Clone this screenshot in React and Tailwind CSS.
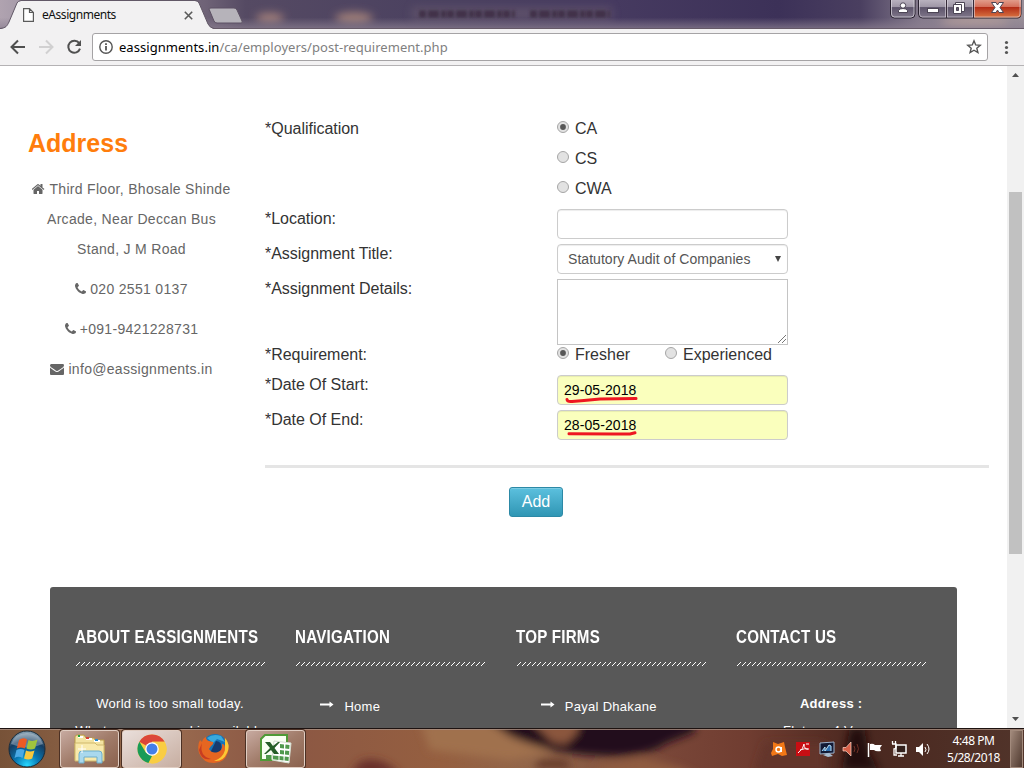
const stripe = "M0 4h1v-1h1v-1h1v-1h1v-1h-1v1h-1v1h-1v1h-1Z";

const glyphs = {
  home: {
    box: "64 0 1664 1792",
    width: 13,
    d: "M1408 992v480q0 26-19 45t-45 19h-384v-384h-256v384h-384q-26 0-45-19t-19-45v-480q0-1 .5-3t.5-3l575-474 575 474q1 2 1 6zm223-69l-62 74q-8 9-21 11h-3q-13 0-21-7l-692-577-692 577q-12 8-24 7-13-2-21-11l-62-74q-8-10-7-23.500t11-21.500l719-599q32-26 76-26t76 26l244 204v-195q0-14 9-23t23-9h192q14 0 23 9t9 23v408l219 182q10 8 11 21.500t-7 23.500z",
  },
  phone: {
    box: "192 0 1408 1792",
    width: 11,
    d: "M1600 1240q0 27-10 70.500t-21 68.500q-21 50-122 106-94 51-186 51-27 0-53-3.500t-57.500-12.500-47-14.500-55.500-20.500-49-18q-98-35-175-83-127-79-264-216t-216-264q-48-77-83-175-3-9-18-49t-20.500-55.500-14.500-47-12.500-57.500-3.500-53q0-92 51-186 56-101 106-122 25-11 68.500-21t70.500-10q14 0 21 3 18 6 53 76 11 19 30 54t35 63.500 31 53.500q3 4 17.500 25t21.500 35.500 7 28.500q0 20-28.500 50t-62 55-62 53-28.500 46q0 9 5 22.500t8.500 20.500 14 24 11.500 19q76 137 174 235t235 174q2 1 19 11.500t24 14 20.500 8.500 22.500 5q18 0 46-28.500t53-62 55-62 50-28.500q14 0 28.500 7t35.500 21.500 25 17.500q25 15 53.500 31t63.500 35 54 30q70 35 76 53 3 7 3 21z",
  },
  envelope: {
    box: "0 0 1792 1792",
    width: 14,
    d: "M1792 710v794q0 66-47 113t-113 47h-1472q-66 0-113-47t-47-113v-794q44 49 101 87 362 246 497 345 57 42 92.500 65.500t94.500 48 110 24.500h2q51 0 110-24.500t94.500-48 92.500-65.500q170-123 498-345 57-39 100-87zm0-294q0 79-49 151t-122 123q-376 261-468 325-10 7-42.500 30.500t-54 38-52 32.500-57.500 27-50 9h-2q-23 0-50-9t-57.500-27-52-32.500-54-38-42.500-30.500q-91-64-262-182.500t-205-142.500q-62-42-117-115.500t-55-136.500q0-78 41.500-130t118.500-52h1472q65 0 112.500 47t47.500 113z",
  },
};

function Glyph({ name }) {
  const g = glyphs[name];
  return (
    <svg className="mr-[4px] inline align-[-2px]" width={g.width} height="14" viewBox={g.box} fill="currentColor" preserveAspectRatio="none"><path d={g.d} /></svg>
  );
}

function TitleBackdrop() {
  return (
    <svg className="absolute inset-0" width="1024" height="29" viewBox="0 0 1024 29" preserveAspectRatio="none">
      <defs>
        <linearGradient id="sky" x1="0" x2="1">
          <stop offset="0" stopColor="#b0a3b0" />
          <stop offset="0.04" stopColor="#9c92a2" />
          <stop offset="0.2" stopColor="#6f6377" />
          <stop offset="0.24" stopColor="#554a63" />
          <stop offset="0.42" stopColor="#4b4160" />
          <stop offset="0.6" stopColor="#463a60" />
          <stop offset="0.76" stopColor="#3c3158" />
          <stop offset="0.84" stopColor="#4a3f60" />
          <stop offset="0.9" stopColor="#857b8c" />
          <stop offset="1" stopColor="#9a8f98" />
        </linearGradient>
        <linearGradient id="haze" x1="0" x2="0" y1="0" y2="1">
          <stop offset="0.6" stopColor="#8b7f90" stopOpacity="0" />
          <stop offset="1" stopColor="#8b7f90" stopOpacity="0.75" />
        </linearGradient>
        <filter id="soft" filterUnits="userSpaceOnUse" x="0" y="-20" width="1024" height="70"><feGaussianBlur stdDeviation="4" /></filter>
        <filter id="soft2" filterUnits="userSpaceOnUse" x="0" y="-20" width="1024" height="70"><feGaussianBlur stdDeviation="1.800" /></filter>
      </defs>
      <rect width="1024" height="29" fill="url(#sky)" />
      <ellipse cx="270" cy="18" rx="14" ry="5" fill="#a27f7a" filter="url(#soft)" />
      <ellipse cx="354" cy="18" rx="19" ry="6" fill="#9e7e78" filter="url(#soft)" />
      <rect x="412" y="7" width="200" height="13" fill="#6a5b70" opacity="0.6" filter="url(#soft)" />
      <path d="M419 14h96M530 14h80" fill="none" stroke="#3a2c3f" strokeWidth="7" strokeDasharray="7 2 11 2 5 1" opacity="0.8" filter="url(#soft2)" />
      <ellipse cx="975" cy="24" rx="35" ry="6" fill="#bba39c" filter="url(#soft)" />
      <rect width="1024" height="29" fill="url(#haze)" />
      <rect y="28" width="1024" height="1" fill="#665a68" />
      <path d="M0 29C6 28 7 26 9 22L17 3q1-2 4-2H195q3 0 4 2l9 21q2 4 6 5Z" fill="#f2f1f2" />
      <path d="M0 28.500C6 28 7 26 9 22L17 3q1-2 4-2.500H195q3 0 4 2.500l9 21q2 4 6 4.500" fill="none" stroke="#625867" />
      <path d="M209 9q0-1 2-1H234q2 0 3 2l5 11q1 2-1 2H217q-2 0-3-2Z" fill="#b6b3ba" stroke="#5d5164" />
    </svg>
  );
}

function WindowButtons() {
  return (
    <svg className="absolute right-0 top-0" width="136" height="20" viewBox="888 0 136 20">
      <defs>
        <linearGradient id="glass" x1="0" x2="0" y1="0" y2="1">
          <stop offset="0" stopColor="#bcb5c2" /><stop offset="0.42" stopColor="#9e96a6" />
          <stop offset="0.45" stopColor="#5d546b" /><stop offset="1" stopColor="#81788b" />
        </linearGradient>
        <linearGradient id="red" x1="0" x2="0" y1="0" y2="1">
          <stop offset="0" stopColor="#e3a291" /><stop offset="0.42" stopColor="#d4705b" />
          <stop offset="0.45" stopColor="#b32c16" /><stop offset="1" stopColor="#d87442" />
        </linearGradient>
      </defs>
      <path d="M890.500-1V14q0 4 4 4H911q4 0 4-4V-1Z" fill="url(#glass)" stroke="#292230" />
      <path d="M891.500-1V14q0 3 3 3H911q3 0 3-3V-1" fill="none" stroke="#dad5de" strokeOpacity="0.75" />
      <path d="M918.500-1V14q0 4 4 4H1018q3 0 3-4V-1Z" fill="url(#glass)" stroke="#292230" />
      <path d="M974-1V17.500H1018q3 0 3-4V-1Z" fill="url(#red)" />
      <path d="M919.500-1V14q0 3 3 3H1017q3 0 3-3V-1M945.500 0v17M947.500 0v17M972.500 0v17M974.500 0v17" fill="none" stroke="#ded7df" strokeOpacity="0.6" />
      <path d="M946.500 0v18M973.500 0v18" stroke="#352a38" />
      <g stroke="#4c4555" strokeWidth="1" fill="#fff">
        <circle cx="903" cy="5.500" r="2.700" />
        <path d="M898.500 12.500v-2q1-2 4.500-2t4.500 2v2Z" />
        <rect x="927.500" y="8.500" width="11" height="4" />
        <path d="M955.500 2.500h9v9h-9Z" />
        <path d="M953.500 4.500h8v9h-8Z" />
        <path d="M956.500 7.500h2v3h-2Z" fill="#635a6d" />
        <path d="M991.500 2.500h4.500l1.500 2.500 1.500-2.500h4.500l-3.500 5 3.500 5h-4.500l-1.500-2.500-1.500 2.500h-4.500l3.500-5Z" />
      </g>
    </svg>
  );
}

function TitleBar() {
  return (
    <header className="relative h-[29px] shrink-0">
      <TitleBackdrop />
      <div className="relative flex h-[29px] items-center pl-[23px] pt-px">
        <svg width="11" height="14" viewBox="0 0 11 14" fill="#fff" stroke="#5a5a5a" strokeWidth="1.200">
          <path d="M0.600 0.600H6.500L10.400 4.500V13.400H0.600ZM6.500 0.600V4.500H10.400" />
        </svg>
        <span className="ml-2 w-[142px] font-['Noto_Sans','Open_Sans',sans-serif] text-[12px] leading-[16px] tracking-[-0.450px] text-[#111]">eAssignments</span>
        <svg width="9" height="9" viewBox="0 0 9 9" stroke="#5a5a5a" strokeWidth="1.600"><path d="M0.800 0.800L8.200 8.200M8.200 0.800L0.800 8.200" /></svg>
      </div>
      <WindowButtons />
    </header>
  );
}

function Toolbar() {
  return (
    <nav className="flex h-[37px] shrink-0 items-start border-b border-[#b4b2b4] bg-[#f2f1f2] pt-1">
      <svg className="shrink-0" width="92" height="28" viewBox="0 33 92 28" fill="none" strokeWidth="2">
        <path d="M25 47H12M18 40.500L11.500 47L18 53.500" stroke="#4f4f4f" />
        <path d="M39 47H52M46 40.500L52.500 47L46 53.500" stroke="#d1d0d1" />
        <path d="M79.200 43.200A6 6 0 1 0 80 48.700" stroke="#505050" />
        <path d="M81 40V46H75Z" fill="#505050" />
      </svg>
      <div className="flex h-7 w-[896px] shrink-0 items-center rounded-[3px] border border-[#a5a3a5] bg-white pl-[6px] pr-[5px]">
        <svg width="14" height="14" viewBox="0 0 14 14" fill="none" stroke="#555">
          <circle cx="7" cy="7" r="6.200" strokeWidth="1.400" /><path d="M7 6V10.500M7 3.300V5" strokeWidth="1.800" />
        </svg>
        <span className="ml-[6px] flex-1 font-['Noto_Sans','Open_Sans',sans-serif] text-[13px] leading-[18px] tracking-[0.040px] text-[#808080]"><span className="text-black">eassignments.in</span>/ca/employers/post-requirement.php</span>
        <svg width="16" height="16" viewBox="0 0 16 16" fill="none" stroke="#555" strokeWidth="1.400"><path d="M8 1.800L9.700 5.900L14.200 6.300L10.800 9.200L11.900 13.600L8 11.200L4.100 13.600L5.200 9.200L1.800 6.300L6.300 5.900Z" /></svg>
      </div>
      <svg className="ml-[15px]" width="7" height="28" viewBox="0 0 7 28" fill="#555"><circle cx="3.500" cy="9.500" r="1.600" /><circle cx="3.500" cy="14.500" r="1.600" /><circle cx="3.500" cy="19.500" r="1.600" /></svg>
    </nav>
  );
}

function Sidebar() {
  return (
    <aside className="w-[265px] shrink-0 pr-[2px] pt-[57px] text-center text-[14px] leading-[30px] tracking-[0.310px] text-[#666]">
      <h2 className="pl-7 text-left text-[25px] font-bold leading-[40px] tracking-normal text-[#ff7d0c]">Address</h2>
      <p className="mt-[11px] whitespace-nowrap"><Glyph name="home" />Third Floor, Bhosale Shinde<br />Arcade, Near Deccan Bus<br />Stand, J M Road</p>
      <p className="mt-[10px]"><Glyph name="phone" />020 2551 0137</p>
      <p className="mt-[10px]"><Glyph name="phone" />+091-9421228731</p>
      <p className="mt-[10px]"><Glyph name="envelope" />info@eassignments.in</p>
    </aside>
  );
}

function Radio({ label, checked }) {
  return (
    <label className="flex h-[30px] items-center pt-[2px]">
      <svg className="mb-[4px] mr-[6px]" width="12" height="12" viewBox="0 0 12 12">
        <circle cx="6" cy="6" r="5.500" fill="#e2e2e2" stroke="#a5a5a5" />
        {checked && <circle cx="6" cy="6" r="2.900" fill="#575757" />}
      </svg>
      {label}
    </label>
  );
}

function Row({ label, height, children }) {
  return (
    <div className={`flex ${height}`}>
      <div className="w-[292px] shrink-0 leading-[32px] tracking-[-0.020px]">{label}</div>
      <div className="w-[231px]">{children}</div>
    </div>
  );
}

const field = "h-[30px] w-[231px] rounded-[4px] border border-[#ccc] text-[14px] leading-[28px] shadow-[inset_0_1px_1px_rgba(0,0,0,0.075)]";

function DateField({ value, mark }) {
  return (
    <div className={`relative mt-[6px] bg-[#faffbd] pl-[6px] tracking-[0.080px] text-black ${field}`}>
      {value}
      <svg className="absolute left-[6px] top-[18px]" width="80" height="12" viewBox="0 0 80 12" fill="none" stroke="#ee1722" strokeWidth="3" strokeLinecap="round" strokeLinejoin="round"><path d={mark} /></svg>
    </div>
  );
}

function RequirementForm() {
  return (
    <main className="w-[724px] text-[16px] text-[#333]">
      <div className="pt-[47px]">
        <Row label="*Qualification" height="h-[90px]"><Radio label="CA" checked /><Radio label="CS" /><Radio label="CWA" /></Row>
        <Row label="*Location:" height="h-[35px]"><div className={`mt-[6px] bg-white ${field}`} /></Row>
        <Row label="*Assignment Title:" height="h-[35px]">
          <div className={`mt-[6px] flex justify-between bg-white pl-[10px] pr-[6px] tracking-[0.040px] text-[#555] ${field}`}>
            Statutory Audit of Companies
            <svg className="mt-[11px]" width="6" height="6" viewBox="0 0 6 6"><path d="M0 0H6L3 6Z" fill="#444" /></svg>
          </div>
        </Row>
        <Row label="*Assignment Details:" height="h-[66px]">
          <div className="mt-[6px] flex h-[66px] items-end justify-end border border-[#c4c4c4] p-px">
            <svg width="8" height="8" viewBox="0 0 8 8" stroke="#777"><path d="M0 8L8 0M4 8L8 4" /></svg>
          </div>
        </Row>
        <Row label="*Requirement:" height="h-[30px]">
          <div className="flex"><div className="w-[108px]"><Radio label="Fresher" checked /></div><Radio label="Experienced" /></div>
        </Row>
        <Row label="*Date Of Start:" height="h-[35px]"><DateField value="29-05-2018" mark="M3 5.500Q3.500 8 8 7.500L20 6.500 36 5 72 4.500" /></Row>
        <Row label="*Date Of End:" height="h-[35px]"><DateField value="28-05-2018" mark="M5 4.800L50 5H66L71 3.800" /></Row>
      </div>
      <hr className="mt-[26px] h-[3px] border-0 bg-[#e5e5e5]" />
      <button className="ml-[244px] mt-[19px] block h-[30px] w-[54px] rounded-[3px] border border-[#2c89a6] bg-linear-to-b from-[#5bc0de] to-[#2f96b4] text-[16px] leading-[28px] text-white shadow-[inset_0_1px_0_rgba(255,255,255,0.2)]">Add</button>
    </main>
  );
}

function FooterColumn({ title, children }) {
  return (
    <section className="w-[220.400px] shrink-0">
      <h3 className="h-[24px] origin-left scale-x-[0.84] whitespace-nowrap text-[18px] font-bold leading-[24px]">{title}</h3>
      <svg className="ml-px mt-[13px]" width="190" height="5" aria-hidden="true" shapeRendering="crispEdges">
        <defs><pattern id="stripes" width="5" height="5" patternUnits="userSpaceOnUse"><path d="M0 3h1v1h-1zM1 2h1v1h-1zM2 1h1v1h-1zM3 0h1v1h-1z" fill="#fff" /></pattern></defs>
        <rect width="190" height="4" fill="url(#stripes)" />
      </svg>
      {children}
    </section>
  );
}

function FooterLink({ label }) {
  return (
    <p className="mt-[26px] flex items-center pl-[25px] leading-[27px]">
      <svg className="mb-[5px] mr-[10px]" width="14" height="7" viewBox="0 0 14 7" fill="#fff"><path d="M0 2.500H9.500V0.500L13.500 3.500L9.500 6.500V4.500H0Z" /></svg>
      {label}
    </p>
  );
}

function Footer() {
  return (
    <footer className="ml-[50px] mt-[70px] flex w-[907px] shrink-0 rounded-t-[3px] bg-[#585858] pb-5 pl-[25px] pt-[38px] text-[13px] tracking-[0.290px] text-white">
      <FooterColumn title="ABOUT EASSIGNMENTS">
        <p className="mt-[23px] w-[190px] whitespace-nowrap text-center leading-[27px]">World is too small today.<br />Whatever you need is available</p>
      </FooterColumn>
      <FooterColumn title="NAVIGATION"><FooterLink label="Home" /></FooterColumn>
      <FooterColumn title="TOP FIRMS"><FooterLink label="Payal Dhakane" /></FooterColumn>
      <FooterColumn title="CONTACT US">
        <p className="mt-[23px] w-[190px] text-center leading-[27px]"><b>Address :</b><br />Flat no. 4 Varun</p>
      </FooterColumn>
    </footer>
  );
}

function Scrollbar() {
  return (
    <div className="flex w-[17px] shrink-0 flex-col items-center bg-[#f1f1f1]">
      <svg className="mt-[7px] shrink-0" width="7" height="4"><path d="M0 4L3.500 0L7 4Z" fill="#505050" /></svg>
      <div className="mt-[115px] h-[362px] w-[13px] bg-[#c1c1c1]" />
      <svg className="mb-[7px] mt-auto shrink-0" width="7" height="4"><path d="M0 0L3.500 4L7 0Z" fill="#505050" /></svg>
    </div>
  );
}

function TaskbarBackdrop() {
  return (
    <svg className="absolute inset-0" width="1024" height="40" viewBox="0 0 1024 40">
      <defs>
        <linearGradient id="wood" x1="0" x2="1">
          <stop offset="0" stopColor="#775238" /><stop offset="0.15" stopColor="#9b6d50" />
          <stop offset="0.27" stopColor="#8b5744" /><stop offset="0.43" stopColor="#955f40" />
          <stop offset="0.52" stopColor="#92664a" /><stop offset="0.66" stopColor="#784537" />
          <stop offset="0.73" stopColor="#703d31" /><stop offset="0.84" stopColor="#4a271f" />
          <stop offset="1" stopColor="#51342a" />
        </linearGradient>
        <filter id="blur" x="-30%" y="-50%" width="160%" height="200%"><feGaussianBlur stdDeviation="4" /></filter>
      </defs>
      <rect width="1024" height="40" fill="url(#wood)" />
      <g filter="url(#blur)">
        <path d="M420-6h80l50 30-40 8-80-10Z" fill="#a0714d" />
        <path d="M360 34q20-8 40 12h-50Z" fill="#672f2a" />
        <path d="M484-10L510 8Q560 30 622 28Q655 25 665 16L695 4V-12Z" fill="#220c1d" />
        <path d="M530-8h48v12l-12 12-14-2Z" fill="#8b573d" />
        <path d="M540 32h25l8 8h-40Z" fill="#5f3428" />
        <path d="M600 37l40-8 40 10 20 10h-110Z" fill="#8f5c40" />
        <path d="M850 0h15q0 25 15 42h-38Z" fill="#24100f" />
        <path d="M765 15h60v30h-70Z" fill="#633429" />
      </g>
      <rect width="1024" height="1" fill="#1d1210" />
      <rect y="1" width="1024" height="1" fill="#a98f81" fillOpacity="0.8" />
    </svg>
  );
}

function TaskButton({ active, children }) {
  return (
    <div className={`flex h-[38px] w-[59px] items-center justify-center rounded-[3px] border border-[#e0cdc2] shadow-[0_0_0_1px_#4b3024] ${active ? "bg-linear-to-br from-[#eadfdb] to-[#c7aea1]" : "bg-linear-to-br from-[#c7aaa0] via-[#a17c6a] to-[#8b624e]"}`}>
      {children}
    </div>
  );
}

function StartOrb() {
  return (
    <svg width="38" height="38" viewBox="0 0 38 38">
      <defs><radialGradient id="orb" cx="0.5" cy="0.95" r="0.95"><stop offset="0" stopColor="#27d8ff" /><stop offset="0.35" stopColor="#0879b4" /><stop offset="0.72" stopColor="#153c61" /><stop offset="1" stopColor="#91aabb" /></radialGradient></defs>
      <circle cx="19" cy="19" r="18" fill="url(#orb)" stroke="#182b3a" />
      <path d="M3 14Q7 3 19 3T35 14Q19 21 3 14Z" fill="#fff" fillOpacity="0.3" />
      <path d="M11 10q4-3 8-.5l-2.200 9q-4-2-8 0Z" fill="#ed5b24" />
      <path d="M20.500 10q4 2 9-.5l-2.500 9q-4 2-8.500 0Z" fill="#a0c43e" />
      <path d="M8.500 20q4-2 8 0l-2 8q-4-2.500-8 0Z" fill="#4aa9e5" />
      <path d="M18 20.500q4 2 8.500 0l-2.300 8q-4 2-8.200 0Z" fill="#f9c83c" />
    </svg>
  );
}

function FolderIcon() {
  return (
    <svg width="34" height="30" viewBox="0 0 34 30">
      <path d="M2 5V3q0-2 2-2h7l2 3h8l1 2h9v20H2Z" fill="#f3e3a1" stroke="#b99b4a" />
      <path d="M5 3h5M13 5h6M21 7h6" stroke="#fff" strokeWidth="2" /><path d="M5 2h2" stroke="#24a23b" strokeWidth="2" /><path d="M13 4h3" stroke="#d64234" strokeWidth="2" /><path d="M22 6h3" stroke="#2588d0" strokeWidth="2" />
      <path d="M2 9h20l2 2h7v16H2Z" fill="#f8e9ab" stroke="#cfb86d" />
      <path d="M6 29V20q0-3 3-3h17q3 0 3 3v9h-5v-6H11v6Z" fill="#a9d8ed" stroke="#6caecb" />
      <path d="M9 11v8M5 15h8" stroke="#fff" />
    </svg>
  );
}

function ChromeIcon() {
  return (
    <svg width="30" height="30" viewBox="0 0 30 30">
      <circle cx="15" cy="15" r="14.500" fill="#f9cd43" />
      <path d="M15 15L2.400 7.700A14.500 14.500 0 0 1 27.600 7.700H15Z" fill="#dc4638" />
      <path d="M2.400 7.700L8.800 18.600 15 22l-3.600 7A14.500 14.500 0 0 1 2.400 7.700Z" fill="#199b58" />
      <path d="M27.600 7.700H15L21 18.500 14.200 29.500A14.500 14.500 0 0 0 27.600 7.700Z" fill="#f9cd43" />
      <circle cx="15" cy="15" r="6.800" fill="#fff" /><circle cx="15" cy="15" r="5.500" fill="#447fe8" />
    </svg>
  );
}

function FirefoxIcon() {
  return (
    <svg width="31" height="31" viewBox="0 0 31 31">
      <circle cx="17" cy="13.500" r="12.500" fill="#1674b7" /><path d="M9 5q6-5 14-2l4 6-8-3-4 4Z" fill="#39a9dd" />
      <path d="M18 8q7 0 5 10-4 7-11 2Z" fill="#173b70" />
      <path d="M2 7l2 2Q5 5 8 4q0 3 3 4l4 1q1 2-2 4l-2 3q3 5 9 3 5-2 4-8 3 0 3 4 2-6-1-10 6 5 4 14-3 11-14 11T1 20Q-1 12 2 7Z" fill="#e66621" />
      <path d="M27 5q6 7 2 15-4 9-13 8 9-3 11-11Z" fill="#fbc934" /><path d="M4 10q-3 13 9 16Q3 28 1 17Z" fill="#c83d21" />
    </svg>
  );
}

function ExcelIcon() {
  return (
    <svg width="33" height="32" viewBox="0 0 33 32">
      <path d="M6 2H28V9L26 27H2V6Z" fill="#f8fff2" stroke="#4e9a36" strokeWidth="2" />
      <path d="M15 8l17 2-2 20-17-3Z" fill="#fff" stroke="#d5ded0" />
      <path d="M21 11l4 .4v4l-4-.4zm5.500.600l4 .4-.3 4-4-.4zM21 17l4 .4v4l-4-.4zm5.200.600l4 .4-.3 4-4-.4zM20.500 23l4 .4v4l-4-.4zm5.300.600l4 .4-.3 4-4-.4zM7 22h5.500v4H7zm7 .500l5.500.500v4l-5.500-.8z" fill="#50994d" />
      <path d="M6 9h5l3 4 5-4h2l-5.500 6 4.500 6h-5l-3-4-5 4H5l6-6Z" fill="#255d27" />
    </svg>
  );
}

function Tray() {
  return (
    <svg width="166" height="22" viewBox="770 737 166 22">
      <path d="M773 741l5 2 6-2 1 5 2 8-5 1-4-2-6 2-1-3 2-4Z" fill="#f27817" /><circle cx="778.500" cy="748.500" r="2.500" fill="none" stroke="#fff" strokeWidth="1.500" /><path d="M781.500 746v5" stroke="#fff" />
      <rect x="796" y="741" width="14" height="14" fill="#c80e13" /><path d="M798 752q6-5 6-9 0 6 5 5M800 749q5-2 8-1M806 743h3" fill="none" stroke="#fff" />
      <path d="M820 742l14-1v11l-14 1Z" fill="#121a35" stroke="#9cb2cc" /><path d="M822 750l3-4v4l4-6 2 1v5" fill="#2f6fae" stroke="#b9def2" /><path d="M823 754l6-2 4 3-5 1Z" fill="#a8bdd0" />
      <path d="M843 746.500h3l5-5.500v14l-5-5h-3Z" fill="#d65f47" stroke="#ffd4c4" strokeWidth="0.700" /><path d="M854 745q2 3 0 6M857 743q3 5 0 9" fill="none" stroke="#6f3025" />
      <path d="M868.500 742v14" stroke="#fff" strokeWidth="1.500" /><path d="M870 743q3-1 5 1h7l-2 3 1 3q-5 1-7-1h-4Z" fill="#fff" />
      <path d="M896 744h10v8h-10Z" fill="#34221e" stroke="#fff" strokeWidth="1.500" /><path d="M892 743h4v3q0 2-2 2v6h3M892.500 740v3M895.500 740v3M898 755h6M901 752v3" fill="none" stroke="#fff" strokeWidth="1.300" />
      <path d="M916 746h3l4-4v13l-4-4h-3Z" fill="#fff" /><path d="M925 746q2 3 0 5M927 743q4 5 0 10" fill="none" stroke="#fff" />
    </svg>
  );
}

function Taskbar() {
  return (
    <div className="relative h-10 shrink-0">
      <TaskbarBackdrop />
      <div className="relative flex h-10 items-center pt-px">
        <div className="ml-2"><StartOrb /></div>
        <div className="ml-[14px]"><TaskButton><FolderIcon /></TaskButton></div>
        <div className="ml-[3px]"><TaskButton active><ChromeIcon /></TaskButton></div>
        <div className="ml-[17px] w-[31px]"><FirefoxIcon /></div>
        <div className="ml-[17px]"><TaskButton><ExcelIcon /></TaskButton></div>
        <div className="ml-[465px]"><Tray /></div>
        <div className="ml-[3px] w-[69px] shrink-0 whitespace-nowrap text-center font-['Noto_Sans','Open_Sans',sans-serif] text-[12px] leading-[17px] tracking-[-0.450px] text-white">4:48 PM<br />5/28/2018</div>
        <div className="ml-auto mr-px h-[38px] w-[13px] border border-[#a28a7c] bg-linear-to-br from-[#a28a7c] to-[#503a30]" />
      </div>
    </div>
  );
}

export default function App() {
  return (
    <div className="flex h-[768px] w-[1024px] flex-col overflow-hidden bg-white font-['Liberation_Sans',Arial,sans-serif]">
      <TitleBar />
      <Toolbar />
      <div className="flex min-h-0 flex-1">
        <div className="flex w-[1007px] shrink-0 flex-col overflow-hidden">
          <div className="flex shrink-0"><Sidebar /><RequirementForm /></div>
          <Footer />
        </div>
        <Scrollbar />
      </div>
      <Taskbar />
    </div>
  );
}
